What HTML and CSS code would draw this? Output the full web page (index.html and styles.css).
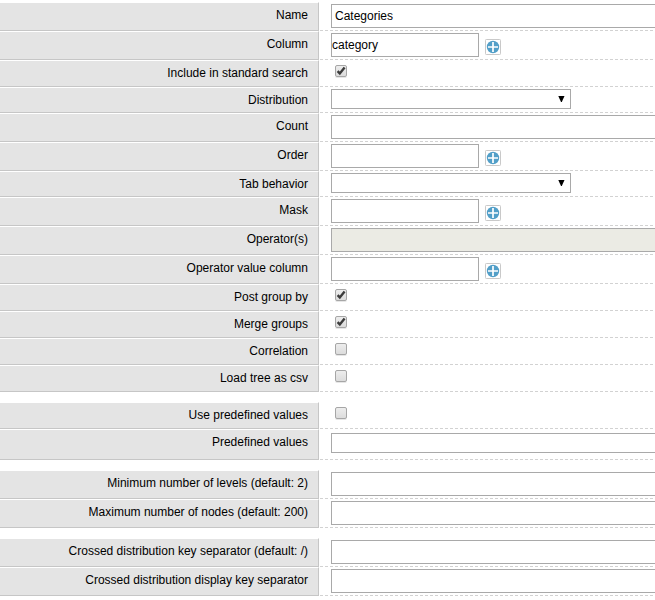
FILE: index.html
```html
<!DOCTYPE html>
<html lang="en">
<head>
<meta charset="utf-8">
<title>Categories</title>
<link rel="stylesheet" href="styles.css">
</head>
<body>
<svg class="defs" width="0" height="0">
<defs>
<linearGradient id="box" x1="0" y1="0" x2="0" y2="1"><stop offset="0" stop-color="#fff"/><stop offset="1" stop-color="#ededed"/></linearGradient>
<symbol id="plus" viewBox="0 0 16 16"><rect x=".5" y=".5" width="15" height="15" rx=".8" fill="url(#box)" stroke="#c9c9c9"/><circle cx="8" cy="8" r="6.2" fill="#529fc8"/><path d="M8 3v10M3 8h10" stroke="#fff" stroke-width="1.7"/></symbol>
<symbol id="arrow" viewBox="0 0 7 6"><path d="M.3 0h6.2L3.8 6H3z" fill="#000"/></symbol>
<symbol id="tick" viewBox="0 0 12 12"><path d="M2.6 6.1l2.2 2.3 4.8-5.9" fill="none" stroke="#3c3c3c" stroke-width="2.4"/></symbol>
</defs>
</svg>
<form>
<section class="group">
<div class="row"><label>Name</label><div class="cell"><div class="input wide padded">Categories</div></div></div>
<div class="row"><label>Column</label><div class="cell"><div class="input">category</div><svg class="plus"><use href="#plus"/></svg></div></div>
<div class="row check"><label>Include in standard search</label><div class="cell"><span class="box"><svg><use href="#tick"/></svg></span></div></div>
<div class="row choice"><label>Distribution</label><div class="cell"><div class="select"><svg><use href="#arrow"/></svg></div></div></div>
<div class="row"><label>Count</label><div class="cell"><div class="input wide"></div></div></div>
<div class="row"><label>Order</label><div class="cell"><div class="input"></div><svg class="plus"><use href="#plus"/></svg></div></div>
<div class="row choice"><label>Tab behavior</label><div class="cell"><div class="select"><svg><use href="#arrow"/></svg></div></div></div>
<div class="row"><label>Mask</label><div class="cell"><div class="input"></div><svg class="plus"><use href="#plus"/></svg></div></div>
<div class="row"><label>Operator(s)</label><div class="cell"><div class="input wide disabled"></div></div></div>
<div class="row"><label>Operator value column</label><div class="cell"><div class="input"></div><svg class="plus"><use href="#plus"/></svg></div></div>
<div class="row check"><label>Post group by</label><div class="cell"><span class="box"><svg><use href="#tick"/></svg></span></div></div>
<div class="row check"><label>Merge groups</label><div class="cell"><span class="box"><svg><use href="#tick"/></svg></span></div></div>
<div class="row check"><label>Correlation</label><div class="cell"><span class="box"></span></div></div>
<div class="row check"><label>Load tree as csv</label><div class="cell"><span class="box"></span></div></div>
</section>
<section class="group">
<div class="row check"><label>Use predefined values</label><div class="cell"><span class="box"></span></div></div>
<div class="row area"><label>Predefined values</label><div class="cell"><div class="input wide"></div></div></div>
</section>
<section class="group">
<div class="row"><label>Minimum number of levels (default: 2)</label><div class="cell"><div class="input wide"></div></div></div>
<div class="row"><label>Maximum number of nodes (default: 200)</label><div class="cell"><div class="input wide"></div></div></div>
</section>
<section class="group">
<div class="row"><label>Crossed distribution key separator (default: /)</label><div class="cell"><div class="input wide"></div></div></div>
<div class="row"><label>Crossed distribution display key separator</label><div class="cell"><div class="input wide"></div></div></div>
</section>
</form>
</body>
</html>
```

FILE: styles.css
```css
* { box-sizing: border-box; }
body { margin: 0; background: #fff; color: #000; font: 12px/14px "Liberation Sans", Arial, sans-serif; overflow: hidden; }
.defs { display: none; }
svg { display: block; }
form { padding-top: 2px; display: flex; flex-direction: column; gap: 10px; }
.row { display: flex; height: 29px; }
.check { height: 27px; }
.choice { height: 26px; }
.area { height: 31px; }
label { width: 319px; flex: none; padding: 5px 10px 0 0; text-align: right; background: #e4e4e4; border-top: 1px solid #fff; border-right: 1px solid #c6c6c6; border-bottom: 1px solid #c6c6c6; white-space: nowrap; }
.cell { flex: 1; min-width: 0; display: flex; align-items: flex-start; padding: 2px 0 0 12px; background: repeating-linear-gradient(90deg, transparent 0 1px, #d2d2d2 1px 4px, transparent 4px 5px) 0 100% / 100% 1px no-repeat; }
.input { width: 148px; height: 24px; flex: none; border: 1px solid #a9a9a9; background: #fff; line-height: 22px; padding-left: 0; }
.wide { width: 340px; }
.padded { padding-left: 3px; }
.disabled { background: #ebebe4; }
.area .cell { padding-top: 4px; }
.area .input { height: 20px; }
.plus { width: 16px; height: 16px; margin: 6px 0 0 6px; }
.select { width: 240px; height: 20px; border: 1px solid #a9a9a9; display: flex; justify-content: flex-end; padding: 6px 5px 0 0; }
.select svg { width: 7px; height: 6px; }
.check .cell { padding: 5px 0 0 16px; }
.box { width: 12px; height: 12px; border: 1px solid #a6a6a6; border-radius: 2px; background: linear-gradient(#ededed, #dcdcdc); box-shadow: 0 1px 0 #e6e6e6; }
.box svg { width: 12px; height: 12px; margin: -1px; }
```
